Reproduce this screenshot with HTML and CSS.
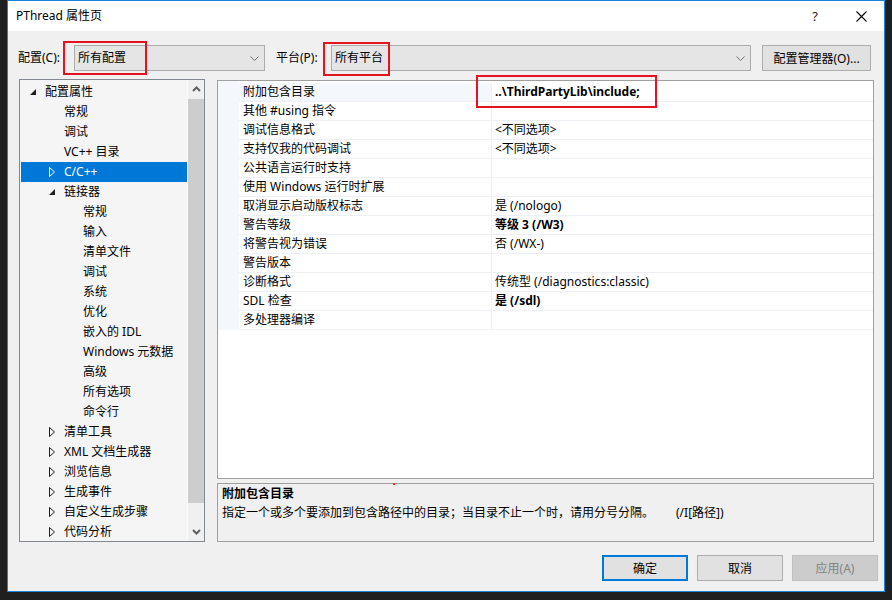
FILE: index.html
```html
<!DOCTYPE html>
<html lang="zh-CN">
<head>
  <meta charset="UTF-8" />
  <title>PThread 属性页</title>
  <link rel="stylesheet" href="styles.css">
</head>
<body>

  <div class="dialog">
    <div class="titlebar">
      <span class="title">PThread 属性页</span>
      <span class="tb-btn tb-help">?</span>
      <span class="tb-btn tb-close">
        <svg width="11" height="11" viewBox="0 0 11 11"><path d="M0.5 0.5 L10.5 10.5 M10.5 0.5 L0.5 10.5" stroke="#000" stroke-width="1.1" fill="none"/></svg>
      </span>
    </div>

    <div class="toolbar">
      <span class="tool-label">配置(C):</span>
      <div class="combo combo-config">
        <span class="combo-text">所有配置</span>
        <svg class="chevron" width="9" height="5" viewBox="0 0 9 5"><path d="M0.5 0.5 L4.5 4.5 L8.5 0.5" stroke="#707070" fill="none"/></svg>
      </div>
      <span class="tool-label platform">平台(P):</span>
      <div class="combo combo-platform">
        <span class="combo-text">所有平台</span>
        <svg class="chevron" width="9" height="5" viewBox="0 0 9 5"><path d="M0.5 0.5 L4.5 4.5 L8.5 0.5" stroke="#707070" fill="none"/></svg>
      </div>
      <button class="btn btn-manager">配置管理器(O)...</button>
    </div>

    <div class="main">
      <div class="tree">
        <ul class="tree-list">
          <li class="node lvl0"><span class="arrow"><svg width="6" height="6" viewBox="0 0 6 6"><path d="M6 0 L6 6 L0 6 Z" fill="#1e1e1e"/></svg></span>配置属性</li>
          <li class="node lvl1"><span class="arrow"></span>常规</li>
          <li class="node lvl1"><span class="arrow"></span>调试</li>
          <li class="node lvl1"><span class="arrow"></span>VC++ 目录</li>
          <li class="node lvl1 selected"><span class="arrow"><svg width="6" height="10" viewBox="0 0 6 10"><path d="M0.5 0.5 L5.5 5 L0.5 9.5 Z" stroke="#fff" fill="none"/></svg></span>C/C++</li>
          <li class="node lvl1"><span class="arrow"><svg width="6" height="6" viewBox="0 0 6 6"><path d="M6 0 L6 6 L0 6 Z" fill="#1e1e1e"/></svg></span>链接器</li>
          <li class="node lvl2"><span class="arrow"></span>常规</li>
          <li class="node lvl2"><span class="arrow"></span>输入</li>
          <li class="node lvl2"><span class="arrow"></span>清单文件</li>
          <li class="node lvl2"><span class="arrow"></span>调试</li>
          <li class="node lvl2"><span class="arrow"></span>系统</li>
          <li class="node lvl2"><span class="arrow"></span>优化</li>
          <li class="node lvl2"><span class="arrow"></span>嵌入的 IDL</li>
          <li class="node lvl2"><span class="arrow"></span>Windows 元数据</li>
          <li class="node lvl2"><span class="arrow"></span>高级</li>
          <li class="node lvl2"><span class="arrow"></span>所有选项</li>
          <li class="node lvl2"><span class="arrow"></span>命令行</li>
          <li class="node lvl1"><span class="arrow"><svg width="6" height="10" viewBox="0 0 6 10"><path d="M0.5 0.5 L5.5 5 L0.5 9.5 Z" stroke="#1e1e1e" fill="none"/></svg></span>清单工具</li>
          <li class="node lvl1"><span class="arrow"><svg width="6" height="10" viewBox="0 0 6 10"><path d="M0.5 0.5 L5.5 5 L0.5 9.5 Z" stroke="#1e1e1e" fill="none"/></svg></span>XML 文档生成器</li>
          <li class="node lvl1"><span class="arrow"><svg width="6" height="10" viewBox="0 0 6 10"><path d="M0.5 0.5 L5.5 5 L0.5 9.5 Z" stroke="#1e1e1e" fill="none"/></svg></span>浏览信息</li>
          <li class="node lvl1"><span class="arrow"><svg width="6" height="10" viewBox="0 0 6 10"><path d="M0.5 0.5 L5.5 5 L0.5 9.5 Z" stroke="#1e1e1e" fill="none"/></svg></span>生成事件</li>
          <li class="node lvl1"><span class="arrow"><svg width="6" height="10" viewBox="0 0 6 10"><path d="M0.5 0.5 L5.5 5 L0.5 9.5 Z" stroke="#1e1e1e" fill="none"/></svg></span>自定义生成步骤</li>
          <li class="node lvl1"><span class="arrow"><svg width="6" height="10" viewBox="0 0 6 10"><path d="M0.5 0.5 L5.5 5 L0.5 9.5 Z" stroke="#1e1e1e" fill="none"/></svg></span>代码分析</li>
        </ul>
        <div class="scrollbar">
          <div class="scroll-btn"><svg width="9" height="6" viewBox="0 0 9 6"><path d="M1 5 L4.5 1.5 L8 5" stroke="#606060" stroke-width="2" fill="none"/></svg></div>
          <div class="scroll-thumb"></div>
          <div class="scroll-track"></div>
          <div class="scroll-btn"><svg width="9" height="6" viewBox="0 0 9 6"><path d="M1 1 L4.5 4.5 L8 1" stroke="#606060" stroke-width="2" fill="none"/></svg></div>
        </div>
      </div>

      <div class="right">
        <div class="grid">
          <div class="grid-body">
            <div class="grid-margin"></div>
            <div class="grid-rows">
              <div class="prop current"><span class="prop-name">附加包含目录</span><span class="prop-value bold">..\ThirdPartyLib\include;</span></div>
              <div class="prop"><span class="prop-name">其他 #using 指令</span><span class="prop-value"></span></div>
              <div class="prop"><span class="prop-name">调试信息格式</span><span class="prop-value">&lt;不同选项&gt;</span></div>
              <div class="prop"><span class="prop-name">支持仅我的代码调试</span><span class="prop-value">&lt;不同选项&gt;</span></div>
              <div class="prop"><span class="prop-name">公共语言运行时支持</span><span class="prop-value"></span></div>
              <div class="prop"><span class="prop-name">使用 Windows 运行时扩展</span><span class="prop-value"></span></div>
              <div class="prop"><span class="prop-name">取消显示启动版权标志</span><span class="prop-value">是 (/nologo)</span></div>
              <div class="prop"><span class="prop-name">警告等级</span><span class="prop-value bold">等级 3 (/W3)</span></div>
              <div class="prop"><span class="prop-name">将警告视为错误</span><span class="prop-value">否 (/WX-)</span></div>
              <div class="prop"><span class="prop-name">警告版本</span><span class="prop-value"></span></div>
              <div class="prop"><span class="prop-name">诊断格式</span><span class="prop-value">传统型 (/diagnostics:classic)</span></div>
              <div class="prop"><span class="prop-name">SDL 检查</span><span class="prop-value bold">是 (/sdl)</span></div>
              <div class="prop"><span class="prop-name">多处理器编译</span><span class="prop-value"></span></div>
            </div>
          </div>
        </div>
        <div class="desc">
          <div class="desc-title">附加包含目录</div>
          <div class="desc-text">指定一个或多个要添加到包含路径中的目录；当目录不止一个时，请用分号分隔。<span class="desc-flag">(/I[路径])</span></div>
        </div>
      </div>
    </div>

    <div class="buttons">
      <button class="btn btn-default">确定</button>
      <button class="btn">取消</button>
      <button class="btn btn-disabled">应用(A)</button>
    </div>
  </div>

  <!-- annotations drawn over the screenshot -->
  <div class="mark mark-config"></div>
  <div class="mark mark-platform"></div>
  <div class="mark mark-include"></div>
  <div class="dot"></div>

</body>
</html>
```

FILE: styles.css
```css
* {
  box-sizing: border-box;
}

html, body {
  margin: 0;
}

body {
  position: relative;
  height: 600px;
  overflow: hidden;
  background: #1f1f1f;
  font-family: "Noto Sans", "Noto Sans CJK SC", sans-serif;
  font-size: 12px;
  color: #000;
}

.dialog {
  margin-left: 7px;
  width: 878px;
  height: 592px;
  border: 1px solid #1883d7;
  background: #f0f0f0;
  display: flex;
  flex-direction: column;
}

/* title bar */
.titlebar {
  height: 30px;
  background: #fff;
  display: flex;
  align-items: center;
  padding-left: 8px;
}
.title {
  flex: 1;
  line-height: 16px;
}
.tb-btn {
  width: 46px;
  height: 30px;
  display: flex;
  align-items: center;
  justify-content: center;
}
.tb-help {
  font-size: 13px;
  color: #222;
}

/* config / platform bar */
.toolbar {
  display: flex;
  align-items: center;
  height: 26px;
  margin-top: 14px;
  padding-left: 10px;
}
.tool-label {
  width: 56px;
  line-height: 16px;
}
.tool-label.platform {
  width: 55px;
  margin-left: 11px;
}
.combo {
  height: 26px;
  border: 1px solid #acacac;
  background: #e5e5e5;
  display: flex;
  align-items: center;
  padding: 0 5px 0 3px;
}
.combo-config {
  width: 191px;
}
.combo-platform {
  width: 420px;
}
.combo-text {
  flex: 1;
  line-height: 16px;
}

.btn {
  height: 26px;
  border: 1px solid #adadad;
  background: #e1e1e1;
  font: inherit;
  color: #000;
  padding: 0;
  width: 86px;
}
.btn-manager {
  width: 109px;
  margin-left: 11px;
}

/* tree + property grid */
.main {
  display: flex;
  height: 463px;
  margin-top: 8px;
  padding-left: 11px;
}

.tree {
  width: 186px;
  border: 1px solid #828790;
  background: #f5f5f5;
  display: flex;
}
.tree-list {
  list-style: none;
  margin: 0 0 0 1px;
  padding: 2px 0 0 0;
  flex: 1;
  overflow: hidden;
}
.node {
  height: 20px;
  line-height: 20px;
  display: flex;
  align-items: center;
  white-space: nowrap;
}
.node.lvl0 {
  padding-left: 9px;
}
.node.lvl1 {
  padding-left: 28px;
}
.node.lvl2 {
  padding-left: 47px;
}
.node.selected {
  background: #0078d7;
  color: #fff;
}
.arrow {
  width: 15px;
  height: 20px;
  display: flex;
  align-items: center;
  flex-shrink: 0;
}

.scrollbar {
  width: 17px;
  background: #f0f0f0;
  border-left: 1px solid #fafafa;
  display: flex;
  flex-direction: column;
}
.scroll-btn {
  height: 18px;
  display: flex;
  align-items: center;
  justify-content: center;
}
.scroll-thumb {
  height: 404px;
  margin: 1px 0 0 0;
  background: #cdcdcd;
}
.scroll-track {
  flex: 1;
}

.right {
  width: 657px;
  margin-left: 12px;
  margin-top: 1px;
  display: flex;
  flex-direction: column;
}

.grid {
  height: 399px;
  border: 1px solid #a0a0a0;
  background: #fff;
}
.grid-body {
  display: flex;
}
.grid-margin {
  width: 21px;
  background: #f4f7fb;
}
.grid-rows {
  flex: 1;
  padding-top: 2px;
}
.prop {
  display: flex;
  height: 19px;
  line-height: 18px;
  border-bottom: 1px solid #edf0f5;
  white-space: nowrap;
}
.prop-name {
  width: 253px;
  padding-left: 4px;
  border-right: 1px solid #edf0f5;
}
.prop.current .prop-name {
  background: #f4f7fb;
}
.prop-value {
  flex: 1;
  padding-left: 3px;
}
.bold {
  font-weight: bold;
}

.desc {
  height: 59px;
  margin-top: 4px;
  border: 1px solid #a0a0a0;
  background: #f0f0f0;
  padding: 1px 4px;
}
.desc-title {
  font-weight: bold;
  line-height: 18px;
}
.desc-text {
  line-height: 19px;
  white-space: nowrap;
}
.desc-flag {
  margin-left: 22px;
}

/* OK / Cancel / Apply */
.buttons {
  display: flex;
  justify-content: flex-end;
  gap: 9px;
  height: 26px;
  margin-top: 13px;
  padding-right: 6px;
}
.btn-default {
  border: 2px solid #0078d7;
}
.btn-disabled {
  background: #cccccc;
  border-color: #bfbfbf;
  color: #838383;
}

/* red annotation boxes */
.mark {
  position: absolute;
  border: 2px solid #e5121f;
}
.mark-config {
  left: 63px;
  top: 41px;
  width: 84px;
  height: 34px;
}
.mark-platform {
  left: 323px;
  top: 42px;
  width: 67px;
  height: 34px;
}
.mark-include {
  left: 476px;
  top: 75px;
  width: 181px;
  height: 33px;
}
.dot {
  position: absolute;
  left: 393px;
  top: 483px;
  width: 2px;
  height: 2px;
  background: #ff2a2a;
}
```
